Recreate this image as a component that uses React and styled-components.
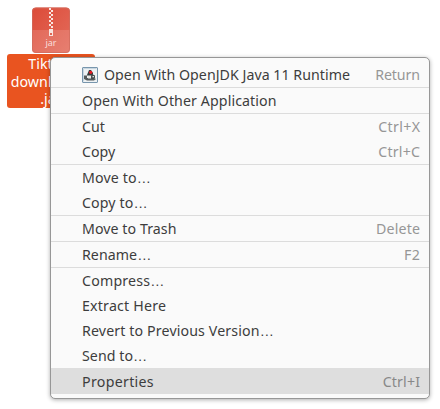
import React from "react";
import styled, { createGlobalStyle } from "styled-components";

const GlobalStyle = createGlobalStyle`
  * { box-sizing: border-box; }
  body { margin: 0; background: #fff; overflow: hidden; }
`;

const Desktop = styled.main`
  position: relative;
  width: 440px;
  height: 409px;
  background: #fff;
  font-family: "Noto Sans", "Open Sans", sans-serif;
`;

const DesktopFile = styled.div`
  display: flex;
  flex-direction: column;
  width: 88px;
  margin-left: 7px;
  padding-top: 7px;
  align-items: center;
`;

const FileIcon = styled.svg`
  display: block;
  width: 40px;
  height: 47px;
`;

const FileName = styled.div`
  width: 88px;
  height: 54px;
  padding-top: 1px;
  border-radius: 3px;
  background: #e95420;
  color: #fff;
  font-size: 14.2px;
  letter-spacing: 0.1px;
  line-height: 17.5px;
  text-align: center;
  white-space: pre;
`;

const Menu = styled.div`
  position: absolute;
  left: 50px;
  top: 57px;
  width: 380px;
  height: 342px;
  padding: 4px 0;
  border: 1px solid #979797;
  border-radius: 5px;
  background: #fafafa;
  box-shadow: 0 1px 4px rgba(0, 0, 0, 0.32);
`;

const Row = styled.div`
  display: flex;
  align-items: center;
  height: 25px;
  padding: 0 9px 0 31px;
  font-size: 14.2px;
  line-height: 25px;
  color: #3d3d3d;
  white-space: pre;
  background: ${(p) => (p.$active ? "#dedede" : "transparent")};
`;

const Label = styled.span`
  letter-spacing: ${(p) => p.$track || 0}px;
`;

const Ellipsis = styled.span`
  font-family: "Liberation Sans", sans-serif;
  letter-spacing: 0;
`;

const Shortcut = styled.span`
  margin-left: auto;
  color: ${(p) => (p.$active ? "#888" : "#969696")};
  letter-spacing: ${(p) => p.$track || 0}px;
  margin-right: ${(p) => -(p.$track || 0)}px;
`;

const Separator = styled.div`
  height: 1px;
  background: ${(p) => (p.$active ? "#dedede" : "#dcdcdc")};
`;

const AppIcon = styled.svg`
  display: block;
  width: 16px;
  height: 16px;
  margin-right: 6px;
`;

const ZIP_TEETH = Array.from({ length: 10 }, (_, i) => i);

function JarIcon() {
  return (
    <FileIcon viewBox="0 0 40 47">
      <defs>
        <linearGradient id="jarTop" x1="0" y1="0" x2="1" y2="1">
          <stop offset="0" stopColor="#dc4b38" />
          <stop offset="1" stopColor="#e46d5d" />
        </linearGradient>
      </defs>
      <rect x="1" y="0.5" width="38" height="45.5" rx="4" fill="url(#jarTop)" />
      <path d="M1 23H39V42a4 4 0 0 1-4 4H5a4 4 0 0 1-4-4Z" fill="#fff" opacity=".13" />
      <rect x="1.5" y="1" width="37" height="44.5" rx="3.5" fill="none" stroke="#cf6c5e" strokeOpacity=".7" />
      {ZIP_TEETH.map((i) => (
        <rect key={i} x={i % 2 ? 20 : 18} y={1 + i * 2} width="2" height="2" fill="#f8e5e0" />
      ))}
      <path d="M18 22h4v7h-4z" fill="#f8e5e0" />
      <path d="M19 26h2v2h-2z" fill="#df6553" />
      <text x="20" y="39" textAnchor="middle" fontSize="9" fontFamily="Noto Sans, sans-serif" fill="#f9dedb">jar</text>
    </FileIcon>
  );
}

function JavaIcon() {
  return (
    <AppIcon viewBox="0 0 16 16">
      <rect x=".5" y=".5" width="15" height="15" rx=".5" fill="#edf1f3" stroke="#7896ad" />
      <path d="M1.5 14.5V1.5h13" fill="none" stroke="#c8d6e0" />
      <path d="M2 8.5h3V11h7l2 1-2 1.500H5L2 12z" fill="#555b5c" />
      <path d="M7 3l2 0 2 3 0 2-2 1H6L5 8z" fill="#353b3b" />
      <path d="M10 7l3 1.500v2L12 12H9V9z" fill="#4a4f50" />
      <path d="M6 8.5h3V11.500H6z" fill="#e7e7e4" />
      <path d="M10.500 9h1.500v1.200h-1.500z" fill="#dfe2e2" />
      <circle cx="8.7" cy="5.3" r="1.6" fill="#e81922" />
    </AppIcon>
  );
}

const GROUPS = [
  [{ label: "Open With OpenJDK Java 11 Runtime", keys: "Return", icon: true, track: 0.03, keyTrack: -0.1 }],
  [{ label: "Open With Other Application", track: 0.1 }],
  [
    { label: "Cut", keys: "Ctrl+X", keyTrack: 0.35 },
    { label: "Copy", keys: "Ctrl+C", keyTrack: 0.2 },
  ],
  [
    { label: "Move to…", track: 0.14 },
    { label: "Copy to…", track: 0.12 },
  ],
  [{ label: "Move to Trash", keys: "Delete", track: 0.06, keyTrack: 0.15 }],
  [{ label: "Rename…", keys: "F2", track: 0.05, keyTrack: 0.4 }],
  [
    { label: "Compress…", track: 0.2 },
    { label: "Extract Here", track: 0.2 },
    { label: "Revert to Previous Version…", track: 0.13 },
    { label: "Send to…", track: 0.05 },
  ],
  [{ label: "Properties", keys: "Ctrl+I", active: true, track: 0.3, keyTrack: 0.15 }],
];

function ItemLabel({ text, track }) {
  const opensDialog = text.endsWith("…");
  return (
    <Label $track={track}>
      {opensDialog ? text.slice(0, -1) : text}
      {opensDialog && <Ellipsis>…</Ellipsis>}
    </Label>
  );
}

export default function App() {
  return (
    <Desktop>
      <GlobalStyle />
      <DesktopFile>
        <JarIcon />
        <FileName>{"Tiktok-\ndownloader\n.jar"}</FileName>
      </DesktopFile>
      <Menu>
        {GROUPS.map((group, g) => (
          <React.Fragment key={g}>
            {g > 0 && <Separator $active={group[0].active} />}
            {group.map((item) => (
              <Row key={item.label} $active={item.active}>
                {item.icon && <JavaIcon />}
                <ItemLabel text={item.label} track={item.track} />
                {item.keys && (
                  <Shortcut $active={item.active} $track={item.keyTrack}>{item.keys}</Shortcut>
                )}
              </Row>
            ))}
          </React.Fragment>
        ))}
      </Menu>
    </Desktop>
  );
}
